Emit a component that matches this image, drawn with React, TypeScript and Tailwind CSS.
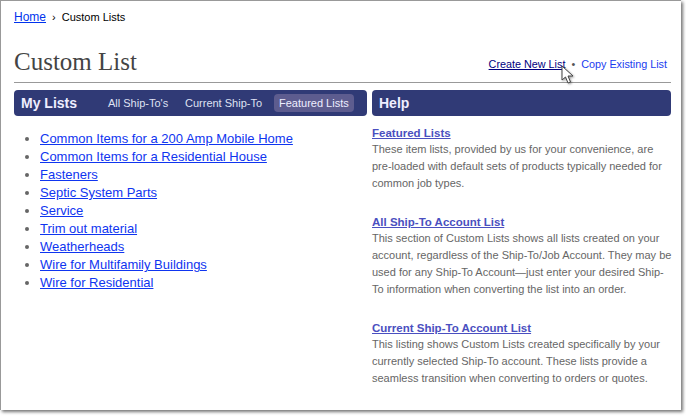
const lists = [
  'Common Items for a 200 Amp Mobile Home',
  'Common Items for a Residential House',
  'Fasteners',
  'Septic System Parts',
  'Service',
  'Trim out material',
  'Weatherheads',
  'Wire for Multifamily Buildings',
  'Wire for Residential',
];

const help = [
  {
    title: 'Featured Lists',
    lines: [
      'These item lists, provided by us for your convenience, are',
      'pre-loaded with default sets of products typically needed for',
      'common job types.',
    ],
  },
  {
    title: 'All Ship-To Account List',
    lines: [
      'This section of Custom Lists shows all lists created on your',
      'account, regardless of the Ship-To/Job Account. They may be',
      'used for any Ship-To Account\u2014just enter your desired Ship-',
      'To information when converting the list into an order.',
    ],
  },
  {
    title: 'Current Ship-To Account List',
    lines: [
      'This listing shows Custom Lists created specifically by your',
      'currently selected Ship-To account. These lists provide a',
      'seamless transition when converting to orders or quotes.',
    ],
  },
];

export default function App() {
  return (
    <div className="relative w-[686px] h-[416px] overflow-hidden bg-white font-['Liberation_Sans',Arial,sans-serif]">
      {/* Window frame */}
      <div className="w-[681px] h-[410px] bg-white border-l border-t border-[#999] shadow-[2px_2px_3px_#777] pl-[13px] pr-[10px] pt-[9px]">
        {/* Breadcrumb */}
        <div className="flex items-center h-[14px] text-[11px] leading-[14px] text-black">
          <a href="#" className="text-[12px] text-[#0033ee] underline">Home</a>
          <span className="mx-[6px]">›</span>
          <span>Custom Lists</span>
        </div>

        {/* Title row */}
        <div className="flex items-end justify-between h-[59px] border-b border-[#999] pb-[5px]">
          <h1 className="font-['Liberation_Serif',serif] text-[25px] leading-[30px] text-[#444]">Custom List</h1>
          <div className="flex items-center text-[10.8px] leading-[14px] pr-[4px] pb-[6px]">
            <a href="#" className="text-[#000080] underline">Create New List</a>
            <span className="mx-[6px] text-[#555]">•</span>
            <a href="#" className="text-[#1a3cf0]">Copy Existing List</a>
          </div>
        </div>

        {/* Columns */}
        <div className="flex gap-[5px] mt-[7px]">
          <div className="w-[353px]">
            <div className="flex items-center h-[26px] rounded-[4px] bg-[#303a76] pl-[7px] pr-[3px]">
              <span className="w-[87px] text-[14px] font-bold text-[#eef]">My Lists</span>
              <span className="w-[77px] text-[11px] text-[#dfe1f2]">All Ship-To's</span>
              <span className="w-[89px] text-[11px] text-[#dfe1f2]">Current Ship-To</span>
              <span className="px-[5px] h-[18px] leading-[19px] rounded-[4px] bg-[#5d5c8f] text-[11px] text-[#eef]">Featured Lists</span>
            </div>
            <ul className="list-disc pl-[26px] mt-[14px] text-[13px] leading-[18px] marker:text-[#666]">
              {lists.map(item => (
                <li key={item}><a href="#" className="text-[#0f35f0] underline">{item}</a></li>
              ))}
            </ul>
          </div>

          <div className="w-[299px]">
            <div className="flex items-center h-[26px] rounded-[4px] bg-[#303a76] px-[7px] text-[14px] font-bold text-[#eef]">Help</div>
            <div className="mt-[9px] flex flex-col gap-[22px]">
              {help.map(section => (
                <div key={section.title}>
                  <a href="#" className="block text-[11.5px] leading-[16px] font-bold text-[#4a4fc0] underline">{section.title}</a>
                  {section.lines.map(line => (
                    <div key={line} className="text-[11px] leading-[17px] text-[#666] whitespace-nowrap">{line}</div>
                  ))}
                </div>
              ))}
            </div>
          </div>
        </div>
      </div>

      {/* Mouse pointer */}
      <svg className="absolute left-[561px] top-[65px] drop-shadow-[1px_1px_1px_rgba(0,0,0,0.4)]" width="14" height="20" viewBox="0 0 14 20">
        <path d="M1 1 L1 15 L4.5 12 L7 18 L9.5 17 L7 11 L12 11 Z" fill="#fff" stroke="#444" strokeWidth="1" strokeLinejoin="round" />
      </svg>
    </div>
  );
}
